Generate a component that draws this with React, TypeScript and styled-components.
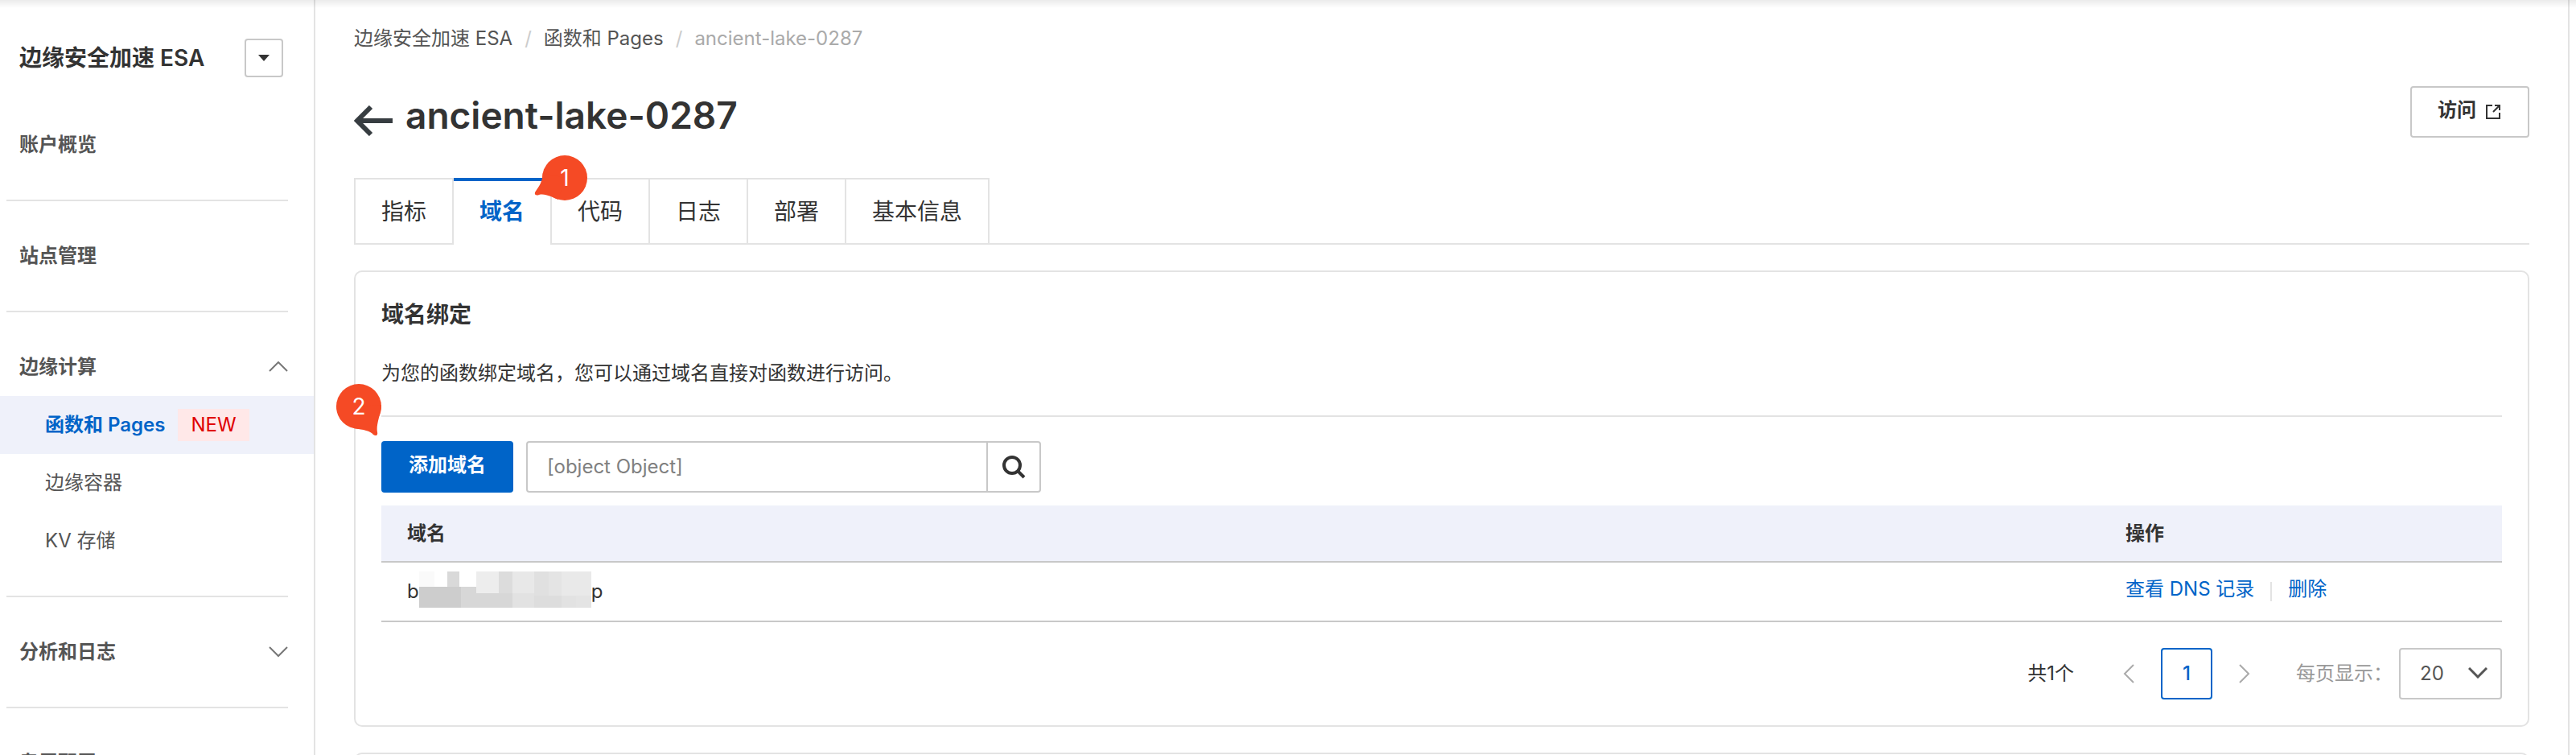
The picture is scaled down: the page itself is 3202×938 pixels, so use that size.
import React from "react";
import styled, { createGlobalStyle } from "styled-components";

const GlobalStyle = createGlobalStyle`
  *, *::before, *::after { box-sizing: border-box; }
  body {
    margin: 0;
    background: #fff;
    color: #333;
    font: 24px/36px Inter, "Noto Sans CJK SC", sans-serif;
  }
  button, input, select { font: inherit; color: inherit; }
  a { color: inherit; text-decoration: none; }
`;

const Page = styled.div`
  display: flex;
  position: relative;
  height: 100vh;
  overflow: hidden;
  padding-right: 8px;
`;

const TopShadow = styled.div`
  position: absolute;
  inset: 0 0 auto;
  height: 10px;
  background: linear-gradient(rgba(0, 0, 0, 0.08), rgba(0, 0, 0, 0));
  pointer-events: none;
`;

const Sidebar = styled.aside`
  flex: 0 0 392px;
  border-right: 2px solid #e3e3e3;
`;

const Product = styled.div`
  display: flex;
  align-items: center;
  justify-content: space-between;
  height: 144px;
  padding: 0 38px 0 24px;
  font-size: 28px;
  font-weight: 600;
`;

const ProductSwitch = styled.button`
  display: grid;
  place-items: center;
  width: 48px;
  height: 48px;
  padding: 0;
  border: 2px solid #c8c8c8;
  border-radius: 4px;
  background: #fff;
`;

const Group = styled.div`
  padding-bottom: 32px;
  & + &::before {
    content: "";
    display: block;
    height: 2px;
    margin: 0 32px 32px 8px;
    background: #e3e3e3;
  }
`;

const GroupLink = styled.a`
  display: flex;
  align-items: center;
  justify-content: space-between;
  height: 72px;
  padding: 0 32px 0 24px;
  color: #555;
  font-weight: 600;
`;

const SubLink = styled.a<{ $active?: boolean }>`
  display: flex;
  align-items: center;
  gap: 16px;
  height: 72px;
  padding-left: 56px;
  color: ${(p) => (p.$active ? "#0064c8" : "#555")};
  background: ${(p) => (p.$active ? "#eff1fa" : "transparent")};
  font-weight: ${(p) => (p.$active ? 600 : 400)};
`;

const NewTag = styled.span`
  padding: 0 16px;
  background: #ffe8e8;
  color: #e00000;
  font-weight: 400;
  line-height: 40px;
`;

const Main = styled.main`
  flex: 1;
  min-width: 0;
  padding: 30px 48px 0;
  border-right: 2px solid #e3e3e3;
`;

const Breadcrumb = styled.nav`
  display: flex;
  gap: 15px;
  color: #555;
`;

const Slash = styled.span`
  color: #ccc;
`;

const Current = styled.span`
  color: #aaa;
`;

const TitleRow = styled.header`
  display: flex;
  align-items: flex-start;
  justify-content: space-between;
  height: 114px;
  margin-top: 41px;
`;

const TitleGroup = styled.div`
  display: flex;
  align-items: center;
  gap: 16px;
  height: 72px;
`;

const BackLink = styled.a`
  display: block;
  padding-top: 14px;
  svg { display: block; }
`;

const Title = styled.h1`
  margin: 0;
  font-size: 46px;
  font-weight: 600;
  line-height: 72px;
`;

const VisitLink = styled.a`
  display: flex;
  align-items: center;
  gap: 12px;
  height: 64px;
  padding: 0 34px 4px 32px;
  border: 2px solid #c8c8c8;
  border-radius: 4px;
  font-weight: 600;
  svg { margin-top: 4px; }
`;

const Tabs = styled.div`
  position: relative;
  display: flex;
  border-bottom: 2px solid #e3e3e3;
`;

const Tab = styled.button<{ $active?: boolean }>`
  height: ${(p) => (p.$active ? 83 : 81)}px;
  margin-bottom: ${(p) => (p.$active ? -2 : 0)}px;
  padding: ${(p) => (p.$active ? "0 32px 4px" : "0 32px")};
  border: 0 solid #e3e3e3;
  border-top: ${(p) => (p.$active ? "4px solid #0064c8" : "2px solid #e3e3e3")};
  border-right-width: 2px;
  background: #fff;
  color: ${(p) => (p.$active ? "#0064c8" : "#333")};
  font-size: 28px;
  font-weight: ${(p) => (p.$active ? 600 : 400)};
  &:first-of-type { border-left-width: 2px; }
`;

const Card = styled.section`
  position: relative;
  margin-top: 32px;
  padding: 32px;
  border: 2px solid #e3e3e3;
  border-radius: 10px;
`;

const CardTitle = styled.h2`
  margin: 0;
  font-size: 28px;
  font-weight: 600;
  line-height: 42px;
`;

const CardText = styled.p`
  margin: 0;
  padding: 34px 0;
  border-bottom: 2px solid #e3e3e3;
`;

const Toolbar = styled.div`
  position: relative;
  display: flex;
  gap: 16px;
  margin: 30px 0 16px;
`;

const PrimaryButton = styled.button`
  height: 64px;
  padding: 0 34px 4px;
  border: 0;
  border-radius: 4px;
  background: #0064c8;
  color: #fff;
  font-weight: 600;
`;

const SearchBox = styled.form`
  display: flex;
  width: 640px;
  height: 64px;
  border: 2px solid #c8c8c8;
  border-radius: 4px;
`;

const SearchInput = styled.input`
  flex: 1;
  min-width: 0;
  padding: 0 24px;
  border: 0;
  outline: 0;
  background: none;
  &::placeholder { color: #808080; opacity: 1; }
`;

const SearchButton = styled.button`
  display: grid;
  place-items: center;
  width: 66px;
  padding: 0;
  border: 0;
  border-left: 2px solid #c8c8c8;
  background: none;
`;

const Table = styled.table`
  width: 100%;
  border-collapse: collapse;
  table-layout: fixed;
  th, td {
    padding: 0 32px;
    border-bottom: 2px solid #c8c8c8;
    text-align: left;
  }
  th { height: 70px; background: #eff1fa; font-weight: 600; }
  td { height: 74px; }
  th:last-child { width: 500px; }
`;

const Masked = styled.span`
  display: flex;
  align-items: center;
  svg { margin-bottom: 6px; }
`;

const Actions = styled.div`
  display: flex;
  align-items: center;
  gap: 20px;
  color: #0064c8;
  a { padding-bottom: 6px; }
`;

const Separator = styled.span`
  width: 2px;
  height: 24px;
  background: #e3e3e3;
`;

const Pagination = styled.div`
  display: flex;
  align-items: center;
  justify-content: flex-end;
  margin-top: 32px;
`;

const StepButton = styled.button`
  display: grid;
  place-items: center;
  width: 80px;
  height: 64px;
  padding: 0;
  border: 0;
  background: none;
`;

const PageButton = styled.button`
  width: 64px;
  height: 64px;
  padding: 0;
  border: 2px solid #0064c8;
  border-radius: 4px;
  background: #fff;
  color: #0064c8;
  font-weight: 500;
`;

const Total = styled.span`
  margin-right: 28px;
`;

const SizeLabel = styled.label`
  margin: 0 8px 0 24px;
  color: #999;
`;

const SelectWrap = styled.div`
  position: relative;
  svg {
    position: absolute;
    top: 24px;
    right: 18px;
    pointer-events: none;
  }
`;

const SizeSelect = styled.select`
  display: block;
  width: 128px;
  height: 64px;
  padding: 0 24px;
  border: 2px solid #c8c8c8;
  border-radius: 4px;
  background: #fff;
  color: #555;
  appearance: none;
`;

const PinBox = styled.span<{ $left: number; $top: number }>`
  position: absolute;
  left: ${(p) => p.$left}px;
  top: ${(p) => p.$top}px;
  width: 56px;
  color: #fff;
  font-size: 28px;
  line-height: 56px;
  text-align: center;
  pointer-events: none;
  svg { position: absolute; left: 0; top: 0; overflow: visible; }
  b { position: relative; font-weight: 400; }
`;

function Chevron({ d, w, h, color, weight = 2 }: { d: string; w: number; h: number; color: string; weight?: number }) {
  return (
    <svg width={w} height={h} viewBox={`0 0 ${w} ${h}`} fill="none" stroke={color} strokeWidth={weight} aria-hidden="true">
      <path d={d} />
    </svg>
  );
}

const DOWN = "M1 1L12 12L23 1";
const UP = "M1 12L12 1L23 12";

function Pin({ n, left, top, tail }: { n: number; left: number; top: number; tail: string }) {
  return (
    <PinBox $left={left} $top={top}>
      <svg width="56" height="56" viewBox="0 0 56 56" fill="#f54a25" aria-hidden="true">
        <circle cx="28" cy="28" r="28" />
        <path d={tail} />
      </svg>
      <b>{n}</b>
    </PinBox>
  );
}

const MOSAIC: [number, number, number, number, string][] = [
  [0, 0, 19, 19, "#fafafa"],
  [35, 0, 15, 19, "#d9d9d9"],
  [71, 0, 28, 27, "#ededed"],
  [99, 0, 17, 27, "#dcdcdc"],
  [116, 0, 27, 27, "#e8e8e8"],
  [143, 0, 18, 30, "#e0e0e0"],
  [161, 0, 16, 30, "#e4e4e4"],
  [177, 0, 37, 30, "#e9e9e9"],
  [0, 19, 52, 26, "#cdcdcd"],
  [52, 19, 19, 26, "#d7d7d7"],
  [71, 27, 45, 18, "#d7d7d7"],
  [116, 27, 27, 18, "#e2e2e2"],
  [143, 30, 34, 15, "#dddddd"],
  [177, 30, 18, 15, "#e2e2e2"],
  [195, 30, 19, 15, "#e4e4e4"],
];

export default function App() {
  return (
    <>
      <GlobalStyle />
      <Page>
        <Sidebar>
          <Product>
            <span>边缘安全加速 ESA</span>
            <ProductSwitch type="button" aria-label="切换产品">
              <svg width="14" height="8" viewBox="0 0 14 8" fill="#333" aria-hidden="true"><path d="M0 0H14L7 8Z" /></svg>
            </ProductSwitch>
          </Product>
          <nav>
            <Group><GroupLink href="#overview">账户概览</GroupLink></Group>
            <Group><GroupLink href="#sites">站点管理</GroupLink></Group>
            <Group>
              <GroupLink href="#compute">边缘计算<Chevron d={UP} w={24} h={14} color="#777" /></GroupLink>
              <SubLink href="#pages" $active>函数和 Pages<NewTag>NEW</NewTag></SubLink>
              <SubLink href="#containers">边缘容器</SubLink>
              <SubLink href="#kv">KV 存储</SubLink>
            </Group>
            <Group><GroupLink href="#logs">分析和日志<Chevron d={DOWN} w={24} h={14} color="#777" /></GroupLink></Group>
            <Group><GroupLink href="#quota">专属配置</GroupLink></Group>
          </nav>
        </Sidebar>
        <Main>
          <Breadcrumb>
            <a href="#esa">边缘安全加速 ESA</a><Slash>/</Slash>
            <a href="#pages">函数和 Pages</a><Slash>/</Slash>
            <Current>ancient-lake-0287</Current>
          </Breadcrumb>
          <TitleRow>
            <TitleGroup>
              <BackLink href="#pages" aria-label="返回">
                <svg width="48" height="38" viewBox="0 0 48 38" fill="none" stroke="#373d41" strokeWidth="6" aria-hidden="true">
                  <path d="M48 19H5M21 2L4 19L21 36" />
                </svg>
              </BackLink>
              <Title>ancient-lake-0287</Title>
            </TitleGroup>
            <VisitLink href="#visit">
              访问
              <svg width="18" height="18" viewBox="0 0 18 18" fill="none" stroke="#333" strokeWidth="2" aria-hidden="true">
                <path d="M8 1H1V17H17V10M11 1H17V7M17 1L9 9" />
              </svg>
            </VisitLink>
          </TitleRow>
          <Tabs role="tablist">
            <Tab role="tab">指标</Tab>
            <Tab role="tab" aria-selected $active>域名</Tab>
            <Tab role="tab">代码</Tab>
            <Tab role="tab">日志</Tab>
            <Tab role="tab">部署</Tab>
            <Tab role="tab">基本信息</Tab>
            <Pin n={1} left={234} top={-28} tail="M1 22C0 36 -7 42 -9 46C-10 50 -6 50 -4 49C4 47 12 52 20 55L28 28Z" />
          </Tabs>
          <Card>
            <CardTitle>域名绑定</CardTitle>
            <CardText>为您的函数绑定域名，您可以通过域名直接对函数进行访问。</CardText>
            <Toolbar>
              <PrimaryButton type="button">添加域名</PrimaryButton>
              <SearchBox>
                <SearchInput aria-label="搜索域名" placeholder="[object Object]" />
                <SearchButton type="button" aria-label="搜索">
                  <svg width="30" height="30" viewBox="0 0 30 30" fill="none" stroke="#333" strokeWidth="4" aria-hidden="true">
                    <circle cx="13" cy="13" r="10" /><path d="M20 20L28 28" />
                  </svg>
                </SearchButton>
              </SearchBox>
              <Pin n={2} left={-56} top={-71} tail="M56 26C56 36 49 50 51 60C52 64 49 65 46 63C42 58 34 57 22 55L28 28Z" />
            </Toolbar>
            <Table>
              <thead><tr><th>域名</th><th>操作</th></tr></thead>
              <tbody>
                <tr>
                  <td>
                    <Masked>
                      b
                      <svg width="214" height="45" viewBox="0 0 214 45" shapeRendering="crispEdges" aria-hidden="true">
                        {MOSAIC.map(([x, y, w, h, c]) => <rect key={`${x}-${y}`} x={x} y={y} width={w} height={h} fill={c} />)}
                      </svg>
                      p
                    </Masked>
                  </td>
                  <td>
                    <Actions>
                      <a href="#dns">查看 DNS 记录</a><Separator /><a href="#delete">删除</a>
                    </Actions>
                  </td>
                </tr>
              </tbody>
            </Table>
            <Pagination>
              <Total>共1个</Total>
              <StepButton type="button" aria-label="上一页"><Chevron d="M13 1L2 12L13 23" w={14} h={24} color="#aaa" /></StepButton>
              <PageButton type="button" aria-current="page">1</PageButton>
              <StepButton type="button" aria-label="下一页"><Chevron d="M1 1L12 12L1 23" w={14} h={24} color="#aaa" /></StepButton>
              <SizeLabel htmlFor="page-size">每页显示：</SizeLabel>
              <SelectWrap>
                <SizeSelect id="page-size" defaultValue="20"><option>20</option></SizeSelect>
                <Chevron d={DOWN} w={24} h={14} color="#555" weight={3} />
              </SelectWrap>
            </Pagination>
          </Card>
          <Card />
        </Main>
        <TopShadow />
      </Page>
    </>
  );
}
